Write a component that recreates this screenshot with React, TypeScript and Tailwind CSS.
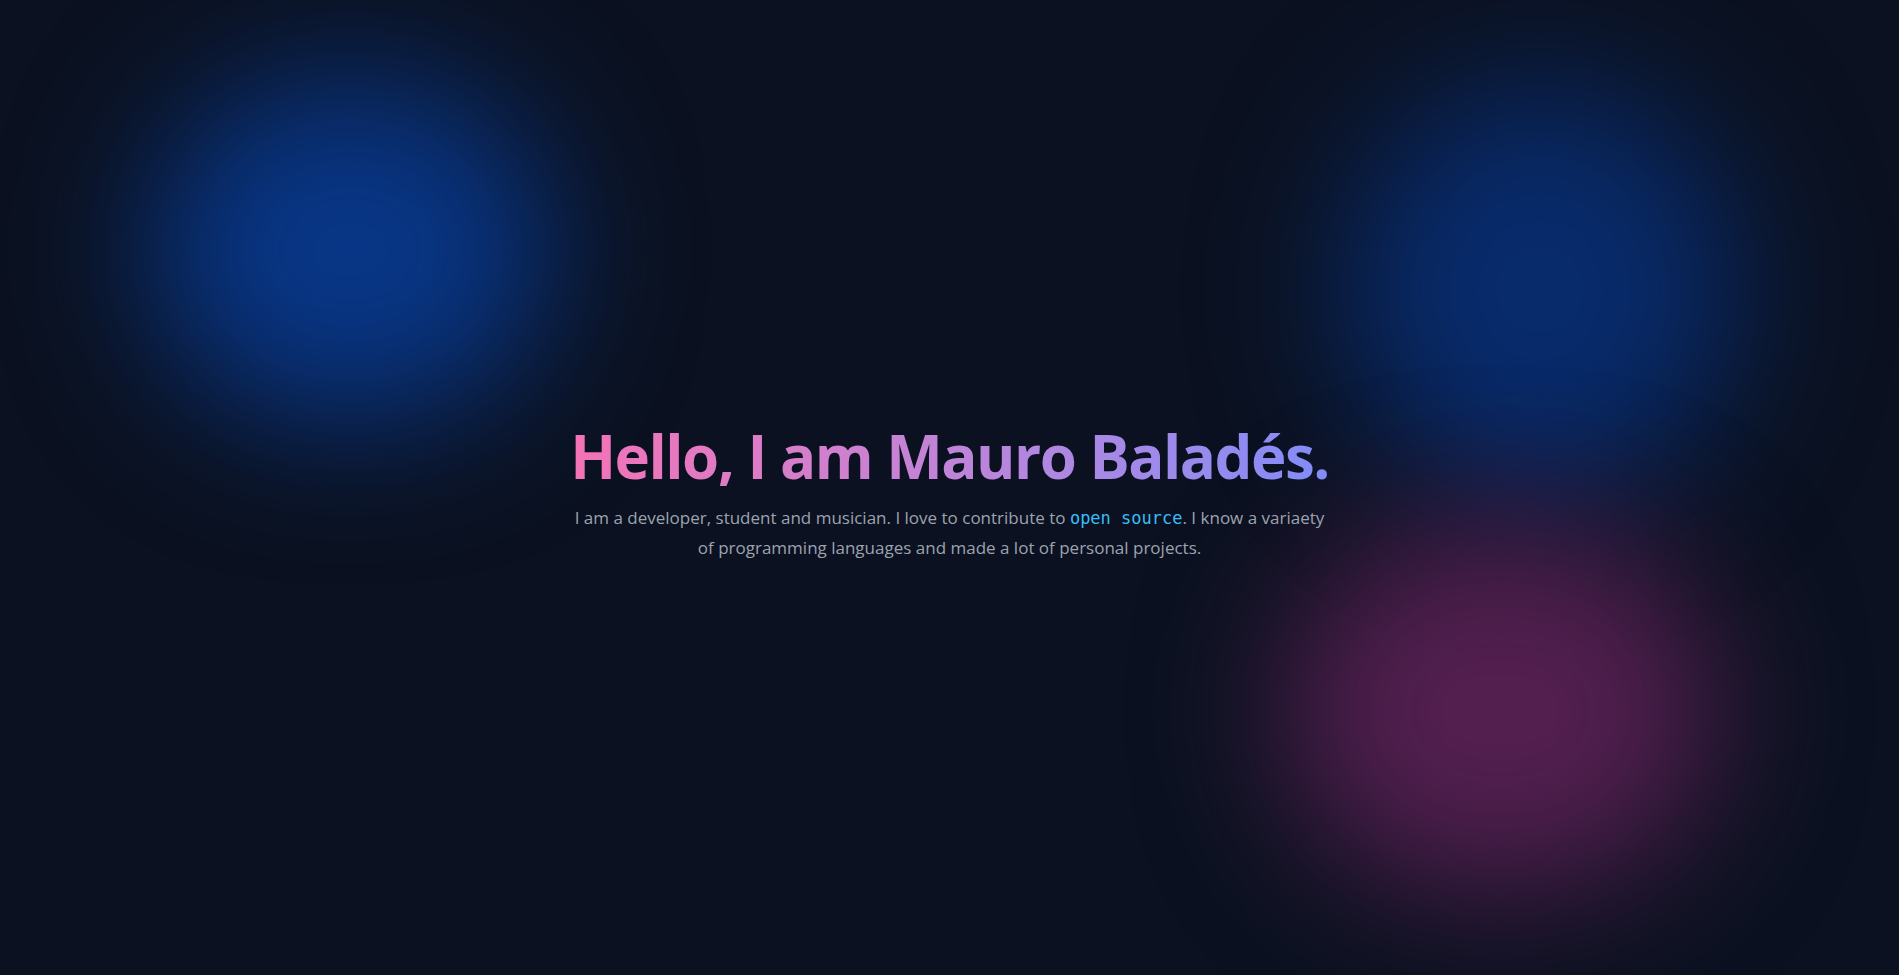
import React from 'react';

const Blob: React.FC<{ className: string }> = ({ className }) => (
  <div className={`pointer-events-none absolute rounded-full blur-[70px] ${className}`} />
);

const App: React.FC = () => {
  return (
    <div
      className="relative min-h-screen overflow-hidden bg-[#0b1120]"
      style={{ fontFamily: '"Open Sans", "Noto Sans", sans-serif' }}
    >
      {/* background blobs */}
      <Blob className="left-[150px] top-[80px] w-[400px] h-[340px] bg-[#083686]" />
      <Blob className="left-[1345px] top-[85px] w-[390px] h-[410px] bg-[#082b6c]" />
      <Blob className="left-[1285px] top-[530px] w-[430px] h-[360px] bg-[#531f4f]" />

      <main className="relative z-10 flex min-h-screen flex-col items-center justify-center px-4 pt-3 text-center">
        <h1 className="bg-gradient-to-r from-[#f472b6] to-[#818cf8] bg-clip-text text-6xl font-bold leading-none tracking-tight text-transparent">
          Hello, I am Mauro Baladés.
        </h1>
        <p className="mt-[17px] max-w-[752px] text-[17px] leading-[29px] text-[#9ca3af]">
          I am a developer, student and musician. I love to contribute to{' '}
          <span className="text-[#38bdf8]" style={{ fontFamily: '"DejaVu Sans Mono", monospace' }}>
            open source
          </span>
          . I know a variaety of programming languages and made a lot of personal projects.
        </p>
      </main>
    </div>
  );
};

export default App;
